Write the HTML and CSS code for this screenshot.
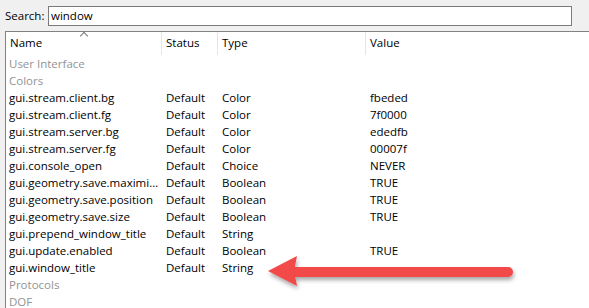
FILE: index.html
```html
<html>
<head>
<title>Preferences - Advanced</title>
<link rel="stylesheet" href="styles.css">
</head>
<body>

<div class="search">
	<label for="q">Search:</label>
	<input type="text" id="q" value="window"/>
</div>

<div class="tree">
	<div class="row head">
		<div class="cell name">Name<span class="sort"></span></div>
		<div class="cell status">Status</div>
		<div class="cell type">Type</div>
		<div class="cell value">Value</div>
	</div>
	<div class="row group"><div class="cell name">User Interface</div></div>
	<div class="row group"><div class="cell name">Colors</div></div>
	<div class="row"><div class="cell name">gui.stream.client.bg</div><div class="cell status">Default</div><div class="cell type">Color</div><div class="cell value">fbeded</div></div>
	<div class="row"><div class="cell name">gui.stream.client.fg</div><div class="cell status">Default</div><div class="cell type">Color</div><div class="cell value">7f0000</div></div>
	<div class="row"><div class="cell name">gui.stream.server.bg</div><div class="cell status">Default</div><div class="cell type">Color</div><div class="cell value">ededfb</div></div>
	<div class="row"><div class="cell name">gui.stream.server.fg</div><div class="cell status">Default</div><div class="cell type">Color</div><div class="cell value">00007f</div></div>
	<div class="row"><div class="cell name">gui.console_open</div><div class="cell status">Default</div><div class="cell type">Choice</div><div class="cell value">NEVER</div></div>
	<div class="row"><div class="cell name">gui.geometry.save.maximized</div><div class="cell status">Default</div><div class="cell type">Boolean</div><div class="cell value">TRUE</div></div>
	<div class="row"><div class="cell name">gui.geometry.save.position</div><div class="cell status">Default</div><div class="cell type">Boolean</div><div class="cell value">TRUE</div></div>
	<div class="row"><div class="cell name">gui.geometry.save.size</div><div class="cell status">Default</div><div class="cell type">Boolean</div><div class="cell value">TRUE</div></div>
	<div class="row"><div class="cell name">gui.prepend_window_title</div><div class="cell status">Default</div><div class="cell type">String</div><div class="cell value"></div></div>
	<div class="row"><div class="cell name">gui.update.enabled</div><div class="cell status">Default</div><div class="cell type">Boolean</div><div class="cell value">TRUE</div></div>
	<div class="row"><div class="cell name">gui.window_title</div><div class="cell status">Default</div><div class="cell type">String</div><div class="cell value"></div></div>
	<div class="row group"><div class="cell name">Protocols</div></div>
	<div class="row group"><div class="cell name">DOF</div></div>

	<!-- annotation arrow pointing at gui.window_title -->
	<svg class="arrow" width="270" height="44" viewBox="0 0 270 44">
		<defs>
			<filter id="sh" x="-10%" y="-40%" width="120%" height="180%">
				<feDropShadow dx="1" dy="3" stdDeviation="2" flood-color="#000" flood-opacity="0.35"/>
			</filter>
		</defs>
		<g filter="url(#sh)" fill="#f24848">
			<rect x="24" y="12" width="226" height="10" rx="5"/>
			<polygon points="5,16 34,1 31,16 34,31"/>
		</g>
	</svg>
</div>

</body>
</html>
```

FILE: styles.css
```css
body {
  margin: 0;
  background: #f0f0f0;
  font-family: "Open Sans", "Noto Sans", sans-serif;
  font-size: 11.5px;
  color: #000;
  height: 308px;
  overflow: hidden;
}

.search {
  display: flex;
  align-items: center;
  padding: 5px 0 0 5px;
  height: 21px;
}
.search label {
  width: 43px;
}
.search input {
  width: 524px;
  height: 20px;
  box-sizing: border-box;
  border: 1px solid #7a7a7a;
  background: #fff;
  font: inherit;
  padding: 0 2px;
  margin: 0;
}

.tree {
  position: relative;
  margin: 5px 0 0 5px;
  border-left: 1px solid #828282;
  border-top: 1px solid #828282;
  background: #fff;
  height: 276px;
  overflow: hidden;
}

.row {
  display: grid;
  grid-template-columns: 156px 56px 148px 1fr;
  height: 17px;
  line-height: 17px;
}
.cell {
  white-space: nowrap;
  overflow: hidden;
  text-overflow: ellipsis;
  padding-left: 4px;
}
.row .name {
  padding-left: 3px;
}

.head {
  height: 23px;
  line-height: 22px;
}
.head .cell {
  position: relative;
  border-right: 1px solid #e5e5e5;
}
.head .name {
  padding-left: 4px;
}
.head .value {
  border-right: none;
}

.sort {
  position: absolute;
  left: 75px;
  top: 1px;
  width: 5px;
  height: 5px;
  border-left: 1px solid #777;
  border-top: 1px solid #777;
  transform: rotate(45deg);
}

.group {
  color: #939393;
}

.arrow {
  position: absolute;
  left: 257px;
  top: 223px;
}
```
